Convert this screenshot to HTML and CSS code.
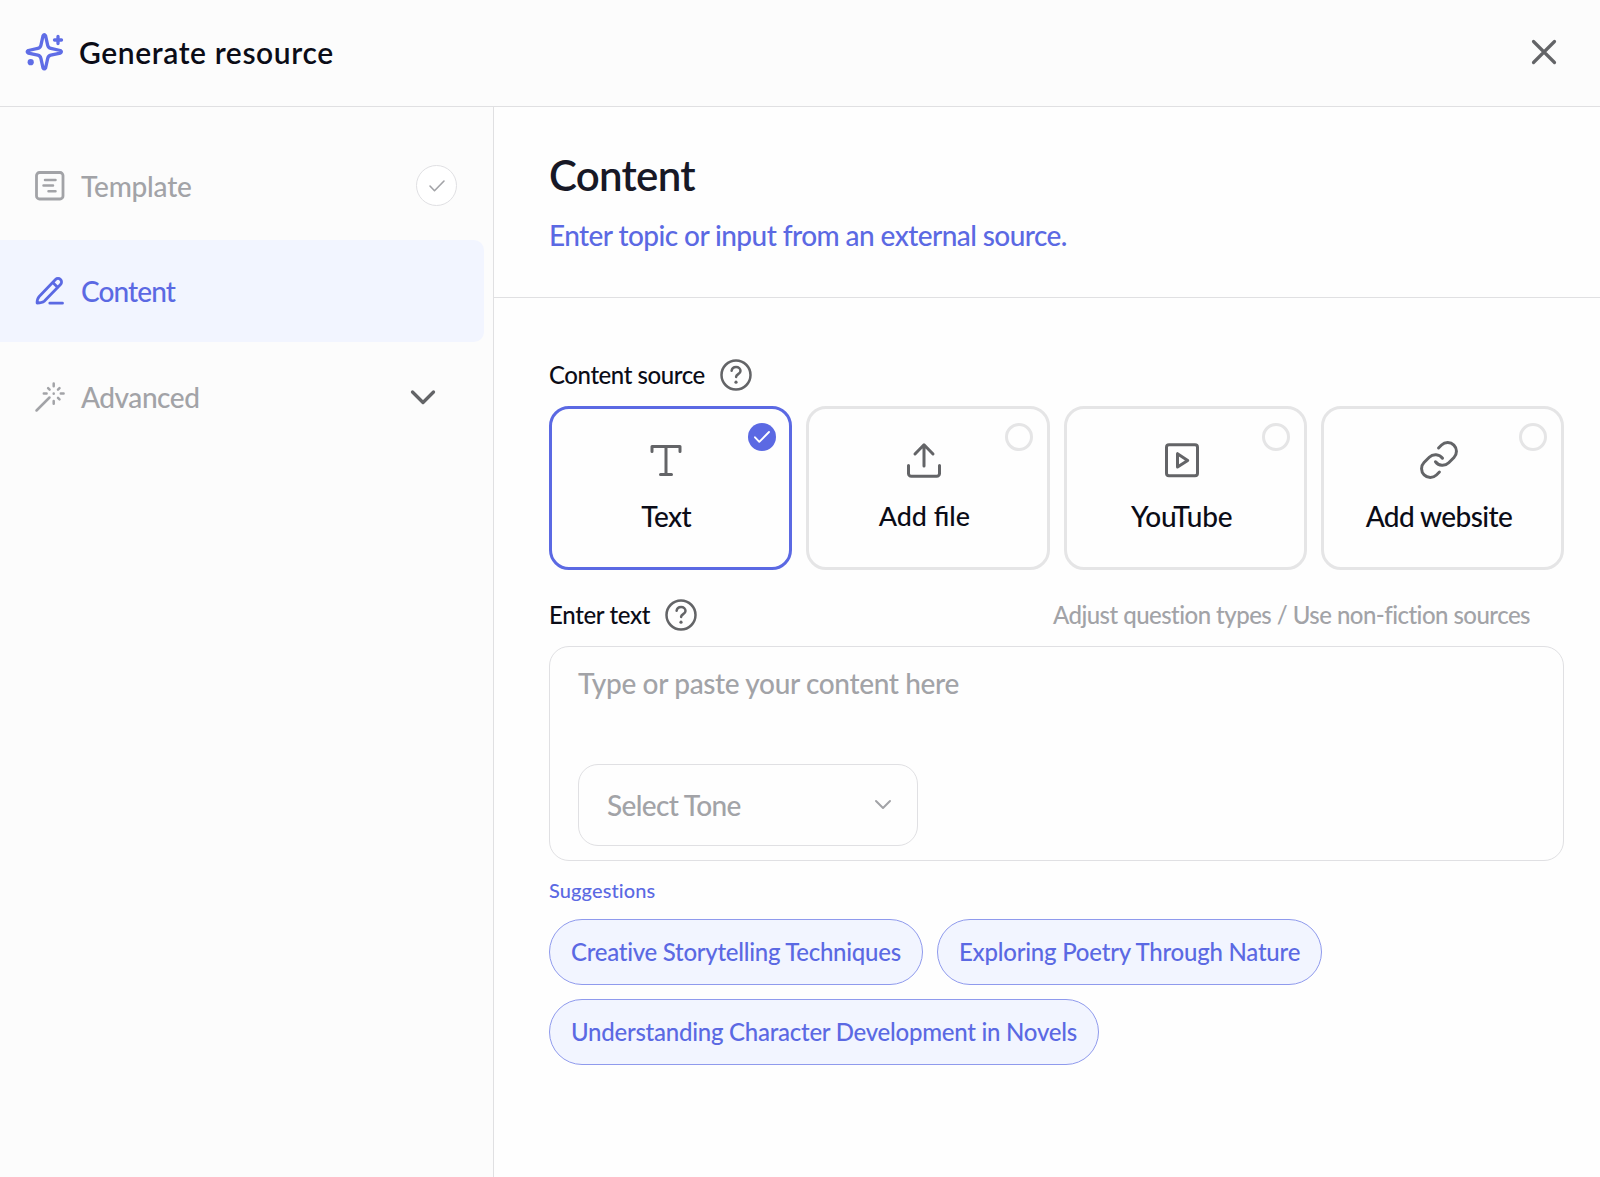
FILE: index.html
```html
<!DOCTYPE html>
<html lang="en">
<head>
<meta charset="utf-8">
<title>Generate resource</title>
<link rel="stylesheet" href="styles.css">
</head>
<body>
<div class="dialog">
  <header class="topbar">
    <svg class="icon sparkle" width="40" height="40" viewBox="0 0 40 40" stroke-width="3.300">
      <path transform="translate(19.3 19.8)" d="M-1.300-16Q0-18.200 1.300-16L3.400-6.500Q4-4 6.500-3.400L16-1.300Q18.200 0 16 1.300L6.500 3.400Q4 4 3.400 6.500L1.300 16Q0 18.200-1.300 16L-3.400 6.500Q-4 4-6.500 3.400L-16 1.300Q-18.200 0-16-1.300L-6.500-3.400Q-4-4-3.400-6.500Z"/>
      <path d="M33 4.500v7M29.500 8h7"/>
      <circle cx="5.700" cy="30.200" r="3.100" fill="currentColor" stroke="none"/>
    </svg>
    <h1 class="topbar-title">Generate resource</h1>
    <svg class="icon close" width="28" height="28" viewBox="0 0 28 28" stroke-width="3.200"><path d="M3.500 3.500l21 21M24.500 3.500l-21 21"/></svg>
  </header>
  <div class="body">
    <nav class="steps">
      <div class="step step-first">
        <svg class="icon" width="32" height="32" viewBox="0 0 32 32" stroke-width="2.800"><rect x="2.500" y="2.500" width="26.500" height="26.500" rx="3"/><path d="M11 10h10.500M9.500 15.600h9.500M14.500 21.200h7" stroke-width="2.500"/></svg>
        <span class="step-name t-template">Template</span>
        <span class="step-done"><svg class="icon" width="18" height="14" viewBox="0 0 18 14" stroke-width="1.600"><path d="M2 7l4.500 4.700L16 2"/></svg></span>
      </div>
      <div class="step step-active">
        <svg class="icon" width="32" height="32" viewBox="0 0 32 32" stroke-width="2.800"><path d="M3.100 28c0-2.800.5-5 2.100-6.600L21.500 4.500a3.500 3.500 0 0 1 5 5L10.200 26.200C8.500 27.700 5.900 28 3.100 28ZM18.800 7.400l5 5M15.800 28.200h12.700"/></svg>
        <span class="step-name t-content">Content</span>
      </div>
      <div class="step">
        <svg class="icon" width="32" height="32" viewBox="0 0 32 32" stroke-width="2.500"><path d="M2.500 29.500L15.500 16.500M19.700 2.500v2.800M19.700 20v2.800M9.800 12.600h2.800M26.800 12.600h2.800M14.100 7.200l1.500 1.500M24 8.700l1.500-1.500M24 16.800l1.500 1.500M19.700 12.600v.1"/></svg>
        <span class="step-name t-advanced">Advanced</span>
        <svg class="icon step-chevron" width="28" height="18" viewBox="0 0 28 18" stroke-width="3.300"><path d="M3.500 4L14 14.500 24.500 4"/></svg>
      </div>
    </nav>
    <main class="panel">
      <div class="panel-head">
        <h2 class="panel-title">Content</h2>
        <p class="panel-sub">Enter topic or input from an external source.</p>
      </div>
      <div class="form">
        <div class="field-head">
          <span class="label t-source">Content source</span>
          <svg class="icon help" width="34" height="34" viewBox="0 0 34 34" stroke-width="2.500"><circle cx="17" cy="17" r="14.500"/><path d="M12.600 12.800c.4-2.600 2.300-3.800 4.500-3.800 2.500 0 4.400 1.600 4.400 3.900 0 3.200-4.300 3.200-4.400 6"/><circle cx="17" cy="24.200" r="1.600" fill="currentColor" stroke="none"/></svg>
        </div>
        <div class="cards">
          <div class="card card-selected">
            <span class="radio"><svg class="icon" width="28" height="28" viewBox="0 0 28 28" stroke-width="1.900"><path d="M7 14.300l4.300 4.500L21 9"/></svg></span>
            <svg class="icon" width="40" height="40" viewBox="0 0 40 40" stroke-width="3"><path d="M6 11.500V6.500h28v5M20 6.500v28M14.500 34.500h11"/></svg>
            <span class="card-name t-text">Text</span>
          </div>
          <div class="card">
            <span class="radio"></span>
            <svg class="icon" width="40" height="40" viewBox="0 0 40 40" stroke-width="3"><path d="M20 26V5M11 14l9-9.200 9 9.200M4.500 25.500v8a2.800 2.800 0 0 0 2.800 2.800h25.400a2.800 2.800 0 0 0 2.800-2.800v-8"/></svg>
            <span class="card-name t-file">Add file</span>
          </div>
          <div class="card">
            <span class="radio"></span>
            <svg class="icon" width="40" height="40" viewBox="0 0 40 40" stroke-width="3"><rect x="4.500" y="4.700" width="31" height="31" rx="2.500"/><path d="M15.500 13.700v13.400l10.200-6.700Z"/></svg>
            <span class="card-name t-youtube">YouTube</span>
          </div>
          <div class="card">
            <span class="radio"></span>
            <svg class="icon" width="40" height="40" viewBox="0.6 0.6 22.8 22.8" stroke-width="1.700"><path d="M10 13a5 5 0 0 0 7.540.54l3-3a5 5 0 0 0-7.070-7.070l-1.720 1.710"/><path d="M14 11a5 5 0 0 0-7.540-.54l-3 3a5 5 0 0 0 7.070 7.070l1.710-1.710"/></svg>
            <span class="card-name t-website">Add website</span>
          </div>
        </div>
        <div class="field-head field-head-text">
          <span class="label t-enter">Enter text</span>
          <svg class="icon help" width="34" height="34" viewBox="0 0 34 34" stroke-width="2.500"><circle cx="17" cy="17" r="14.500"/><path d="M12.600 12.800c.4-2.600 2.300-3.800 4.500-3.800 2.500 0 4.400 1.600 4.400 3.900 0 3.200-4.300 3.200-4.400 6"/><circle cx="17" cy="24.200" r="1.600" fill="currentColor" stroke="none"/></svg>
          <span class="hint">Adjust question types / Use non-fiction sources</span>
        </div>
        <div class="editor">
          <div class="placeholder">Type or paste your content here</div>
          <div class="tone">
            <span class="tone-name">Select Tone</span>
            <svg class="icon" width="20" height="14" viewBox="0 0 20 14" stroke-width="2"><path d="M3 3l7 7 7-7"/></svg>
          </div>
        </div>
        <div class="suggest-title">Suggestions</div>
        <div class="chips">
          <span class="chip chip-story">Creative Storytelling Techniques</span>
          <span class="chip chip-poetry">Exploring Poetry Through Nature</span>
          <span class="chip chip-novels">Understanding Character Development in Novels</span>
        </div>
      </div>
    </main>
  </div>
</div>
</body>
</html>
```

FILE: styles.css
```css
* { box-sizing: border-box; }
body {
  margin: 0;
  font-family: Lato, "Noto Sans", sans-serif;
  font-weight: 500;
  color: #0b0c17;
  background: #fefefe;
}
h1, h2, p { margin: 0; }
.icon {
  display: block;
  flex: none;
  fill: none;
  stroke: currentColor;
  stroke-linecap: round;
  stroke-linejoin: round;
}
.dialog { height: 1177px; display: flex; flex-direction: column; overflow: hidden; }

.topbar {
  height: 107px;
  flex: none;
  display: flex;
  align-items: center;
  padding: 0 42px 2px 25px;
  background: #fcfcfc;
  border-bottom: 1px solid #e0e0e2;
}
.sparkle { color: #5f6de6; }
.topbar-title {
  margin-left: 14px;
  font-size: 30px;
  line-height: 40px;
  font-weight: 600;
  letter-spacing: 0.600px;
  white-space: nowrap;
}
.close { margin-left: auto; color: #636467; }

.body { flex: 1; display: flex; min-height: 0; }
.steps {
  width: 494px;
  flex: none;
  display: flex;
  flex-direction: column;
  gap: 4px;
  padding: 27px 9px 0 0;
  background: #fcfcfc;
  border-right: 1px solid #e0e0e2;
}
.step {
  height: 102px;
  display: flex;
  align-items: center;
  padding: 0 27px 0 34px;
  color: #a2a3a7;
  border-radius: 0 10px 10px 0;
}
.step-first { padding-top: 1px; }
.step-active { background: #f2f5ff; color: #5b69e3; }
.step-name { margin-left: 15px; font-size: 28px; line-height: 36px; white-space: nowrap; }
.t-template { letter-spacing: -0.200px; }
.t-content { letter-spacing: -0.900px; }
.t-advanced { letter-spacing: -0.450px; }
.step-done {
  width: 41px;
  height: 41px;
  margin-left: auto;
  display: flex;
  align-items: center;
  justify-content: center;
  background: #fff;
  border: 1.500px solid #e0e0e3;
  border-radius: 50%;
}
.step-chevron { margin-left: auto; margin-right: 20px; color: #636467; }

.panel { flex: 1; min-width: 0; }
.panel-head {
  height: 191px;
  padding: 43px 36px 0 55px;
  border-bottom: 1px solid #e0e0e2;
}
.panel-title {
  font-size: 42px;
  line-height: 50px;
  font-weight: 600;
  letter-spacing: -0.700px;
  color: #171826;
}
.panel-sub {
  margin-top: 17px;
  font-size: 28px;
  line-height: 36px;
  letter-spacing: -0.570px;
  color: #5b69e3;
  white-space: nowrap;
}

.form { padding: 60px 36px 0 55px; }
.field-head { height: 34px; display: flex; align-items: center; }
.label { font-size: 24px; line-height: 34px; white-space: nowrap; }
.t-source { letter-spacing: -0.430px; }
.t-enter { letter-spacing: -0.330px; }
.help { margin-left: 14px; color: #636467; }
.hint {
  margin-left: auto;
  margin-right: 34px;
  font-size: 24px;
  line-height: 34px;
  letter-spacing: -0.530px;
  color: #a2a3a7;
  white-space: nowrap;
}
.cards { margin-top: 14px; display: grid; grid-template-columns: repeat(4, 1fr); gap: 14px; }
.card {
  position: relative;
  height: 164px;
  padding: 31px 7px 0 0;
  display: flex;
  flex-direction: column;
  align-items: center;
  border: 3px solid #e5e5e6;
  border-radius: 20px;
}
.card > .icon { color: #636467; }
.card-name { margin-top: 18px; font-size: 28px; line-height: 36px; white-space: nowrap; }
.t-text { letter-spacing: -0.600px; }
.t-file { font-size: 26.900px; }
.t-youtube { letter-spacing: -0.250px; }
.t-website { letter-spacing: -0.600px; }
.card-selected { border-color: #5b69e3; padding-right: 9px; }
.radio {
  position: absolute;
  top: 14px;
  right: 14px;
  width: 28px;
  height: 28px;
  border: 3px solid #e5e5e6;
  border-radius: 50%;
}
.card-selected .radio { right: 13px; border: 0; background: #5b69e3; color: #fff; }
.field-head-text { margin-top: 28px; }

.editor {
  height: 215px;
  margin-top: 14px;
  padding: 18px 28px 0;
  border: 1.500px solid #e0e0e3;
  border-radius: 20px;
}
.placeholder {
  font-size: 28px;
  line-height: 36px;
  letter-spacing: -0.350px;
  color: #a2a3a7;
  white-space: nowrap;
}
.tone {
  width: 340px;
  height: 82px;
  margin-top: 63px;
  padding: 0 24px 0 28px;
  display: flex;
  align-items: center;
  justify-content: space-between;
  font-size: 28px;
  letter-spacing: -0.650px;
  color: #a2a3a7;
  border: 1.500px solid #e0e0e3;
  border-radius: 20px;
}
.suggest-title { margin-top: 14px; font-size: 20px; line-height: 30px; color: #5b69e3; letter-spacing: 0.100px; }
.chips { margin-top: 14px; display: flex; flex-wrap: wrap; gap: 14px; }
.chip {
  height: 66px;
  display: flex;
  align-items: center;
  padding: 0 21px 1px;
  font-size: 24px;
  color: #5b69e3;
  white-space: nowrap;
  background: #f2f5ff;
  border: 1.500px solid #8f9aed;
  border-radius: 33px;
}
.chip-story { width: 374px; letter-spacing: -0.270px; }
.chip-poetry { width: 385px; letter-spacing: -0.230px; }
.chip-novels { width: 550px; letter-spacing: -0.250px; }
```
